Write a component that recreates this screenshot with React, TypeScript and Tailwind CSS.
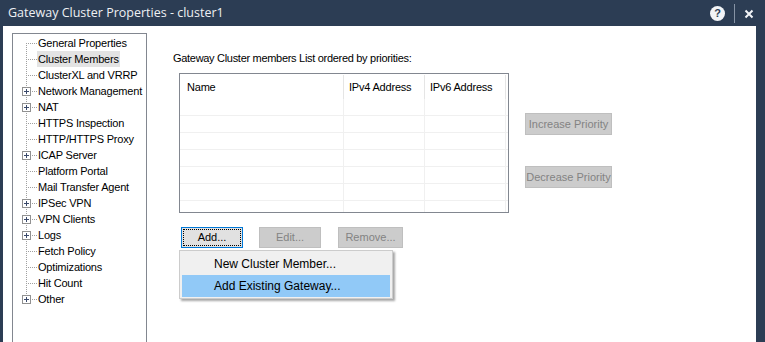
import React from "react";

const treeItems: { label: string; plus?: boolean; selected?: boolean }[] = [
  { label: "General Properties" },
  { label: "Cluster Members", selected: true },
  { label: "ClusterXL and VRRP" },
  { label: "Network Management", plus: true },
  { label: "NAT", plus: true },
  { label: "HTTPS Inspection" },
  { label: "HTTP/HTTPS Proxy" },
  { label: "ICAP Server", plus: true },
  { label: "Platform Portal" },
  { label: "Mail Transfer Agent" },
  { label: "IPSec VPN", plus: true },
  { label: "VPN Clients", plus: true },
  { label: "Logs", plus: true },
  { label: "Fetch Policy" },
  { label: "Optimizations" },
  { label: "Hit Count" },
  { label: "Other", plus: true },
];

function Connector({ plus, first, last }: { plus?: boolean; first?: boolean; last?: boolean }) {
  const dots: React.ReactNode[] = [];
  const yStart = first ? 8 : 0;
  const yEnd = last ? 8 : 16;
  for (let y = yStart; y < yEnd; y += 2) {
    dots.push(<rect key={"v" + y} x={13} y={y} width={1} height={1} fill="#a0a0a0" />);
  }
  for (let x = 15; x < 24; x += 2) {
    dots.push(<rect key={"h" + x} x={x} y={8} width={1} height={1} fill="#a0a0a0" />);
  }
  return (
    <svg width={24} height={16} className="shrink-0">
      {dots}
      {plus && (
        <g>
          <rect x={9.5} y={4.5} width={8} height={8} fill="#ffffff" stroke="#919191" />
          <rect x={11} y={8} width={5} height={1} fill="#3b4a6b" />
          <rect x={13} y={6} width={1} height={5} fill="#3b4a6b" />
        </g>
      )}
    </svg>
  );
}

function Btn({
  children,
  w,
  h = "h-[21px]",
  disabled,
  focused,
}: {
  children: React.ReactNode;
  w: string;
  h?: string;
  disabled?: boolean;
  focused?: boolean;
}) {
  if (focused) {
    return (
      <div className={`${w} ${h} border border-[#0078d7] bg-[#e1e1e1] p-[1px]`}>
        <div className="w-full h-full border border-dotted border-[#000] flex items-center justify-center text-[11px] text-black">
          {children}
        </div>
      </div>
    );
  }
  return (
    <div
      className={`${w} ${h} border flex items-center justify-center text-[11px] ${
        disabled ? "border-[#bfbfbf] bg-[#cccccc] text-[#838383]" : "border-[#adadad] bg-[#e1e1e1] text-black"
      }`}
    >
      {children}
    </div>
  );
}

export default function App() {
  return (
    <div
      className="w-[765px] h-[342px] bg-[#2c3d54] flex flex-col overflow-hidden"
      style={{ fontFamily: '"Liberation Sans", Arial, sans-serif' }}
    >
      {/* Title bar */}
      <div className="h-[26px] flex items-center pl-[8px] pr-[11px] shrink-0">
        <div
          className="text-[12.5px] text-[#eef0f3] flex-1"
          style={{ fontFamily: '"Open Sans", "Noto Sans", sans-serif' }}
        >
          Gateway Cluster Properties - cluster1
        </div>
        <div className="w-[15px] h-[15px] rounded-full bg-[#f2f4f7] flex items-center justify-center text-[11px] font-bold text-[#2c3d54] leading-none mr-[9px] pt-[1px]">
          ?
        </div>
        <div className="w-[1px] h-[19px] bg-[#8693a5] mr-[9px]" />
        <svg width={10} height={10} viewBox="0 0 10 10" className="mt-[1px]">
          <path d="M1.5 1.5 L8.5 8.5 M8.5 1.5 L1.5 8.5" stroke="#f2f4f7" strokeWidth={2} />
        </svg>
      </div>

      {/* Body */}
      <div className="flex-1 ml-[3px] mr-[9px] bg-white flex min-h-0 relative">
        {/* Tree */}
        <div className="ml-[9px] mt-[7px] w-[135px] border border-b-0 border-[#828790] pt-[1px] shrink-0">
          {treeItems.map((it, i) => (
            <div key={it.label} className="h-[16px] flex items-center">
              <Connector plus={it.plus} first={i === 0} last={i === treeItems.length - 1} />
              <div
                className={`h-[16px] flex items-center px-[1px] text-[11px] tracking-[-0.2px] text-black whitespace-nowrap ${
                  it.selected ? "bg-[#e3e3e3]" : ""
                }`}
              >
                {it.label}
              </div>
            </div>
          ))}
        </div>

        {/* Right content */}
        <div className="flex-1 flex flex-col pl-[26px]">
          <div className="mt-[25px] h-[14px] flex items-center text-[11px] tracking-[-0.3px] text-black whitespace-nowrap">
            Gateway Cluster members List ordered by priorities:
          </div>
          <div className="flex mt-[8px] ml-[6px]">
            {/* List */}
            <div className="w-[330px] h-[140px] border border-[#828790] overflow-hidden shrink-0">
              <div className="h-[25px] flex text-[11px] tracking-[-0.2px] text-black">
                <div className="w-[164px] border-r border-[#e5e5e5] pl-[7px] flex items-center mt-[1px]">Name</div>
                <div className="w-[81px] border-r border-[#e5e5e5] pl-[5px] flex items-center mt-[1px]">
                  IPv4 Address
                </div>
                <div className="w-[81px] border-r border-[#e5e5e5] pl-[5px] flex items-center mt-[1px]">
                  IPv6 Address
                </div>
              </div>
              {[0, 1, 2, 3, 4, 5, 6].map((r) => (
                <div key={r} className="h-[17px] flex border-b border-[#f0f0f0]">
                  <div className="w-[164px] border-r border-[#f0f0f0]" />
                  <div className="w-[81px] border-r border-[#f0f0f0]" />
                  <div className="w-[81px] border-r border-[#f0f0f0]" />
                </div>
              ))}
            </div>
            {/* Priority buttons */}
            <div className="flex flex-col ml-[16px] mt-[40px] gap-[31px]">
              <Btn w="w-[87px]" h="h-[22px]" disabled>
                Increase Priority
              </Btn>
              <Btn w="w-[87px]" h="h-[22px]" disabled>
                Decrease Priority
              </Btn>
            </div>
          </div>
          {/* Bottom buttons */}
          <div className="flex mt-[14px] ml-[8px]">
            <Btn w="w-[62px]" focused>
              Add...
            </Btn>
            <div className="ml-[16px]">
              <Btn w="w-[62px]" disabled>
                Edit...
              </Btn>
            </div>
            <div className="ml-[17px]">
              <Btn w="w-[65px]" disabled>
                Remove...
              </Btn>
            </div>
          </div>
        </div>

        {/* Popup menu */}
        <div className="absolute left-[176px] top-[224px] w-[214px] h-[49px] bg-[#f0f0f0] border border-[#cccccc] shadow-[2px_2px_2px_rgba(0,0,0,0.35)] pt-[2px] px-[2px]">
          <div className="h-[22px] flex items-center pl-[32px] text-[12px] text-black">New Cluster Member...</div>
          <div className="h-[22px] flex items-center pl-[32px] text-[12px] text-black bg-[#91c9f7]">
            Add Existing Gateway...
          </div>
        </div>
      </div>
    </div>
  );
}
